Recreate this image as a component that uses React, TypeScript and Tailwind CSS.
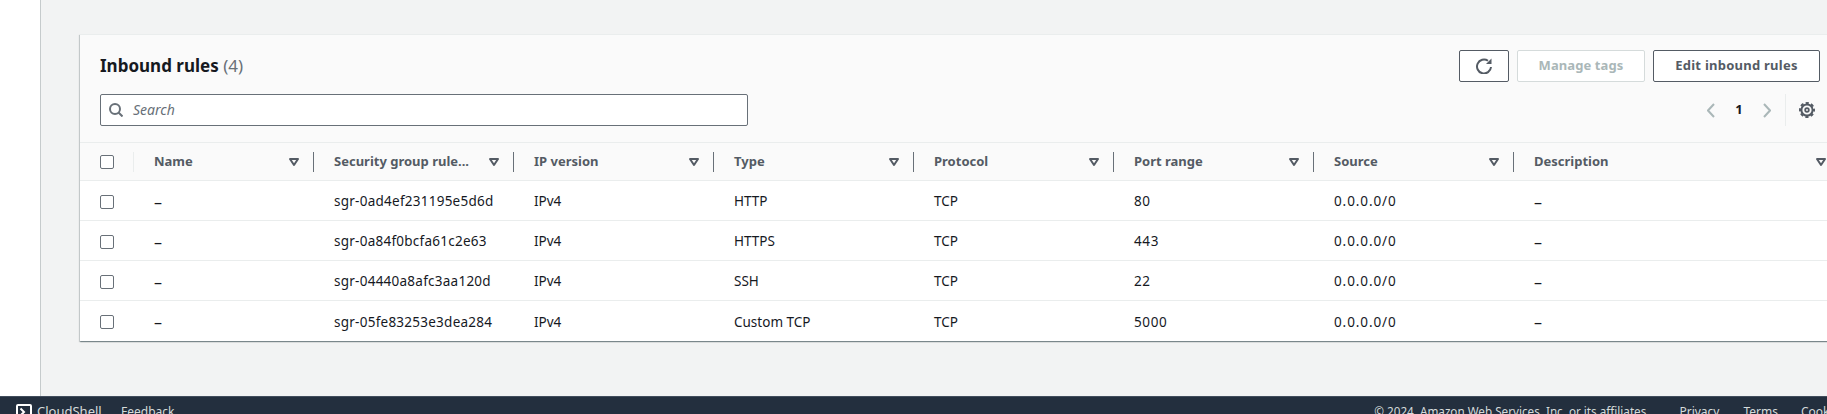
const columns = ["Name", "Security group rule...", "IP version", "Type", "Protocol", "Port range", "Source", "Description"];

const rules = [
  { id: "sgr-0ad4ef231195e5d6d", type: "HTTP", port: "80" },
  { id: "sgr-0a84f0bcfa61c2e63", type: "HTTPS", port: "443" },
  { id: "sgr-04440a8afc3aa120d", type: "SSH", port: "22" },
  { id: "sgr-05fe83253e3dea284", type: "Custom TCP", port: "5000" },
];

const tableGrid = "grid grid-cols-[54px_180px_200px_200px_200px_200px_200px_200px_326px]";

function Checkbox() {
  return <span className="block w-[14px] h-[14px] rounded-[2px] border border-[#687078] bg-white" />;
}

function FilterIcon() {
  return (
    <svg viewBox="0 0 12 10" className="w-[12px] h-[10px] shrink-0" fill="none" stroke="#545b64" strokeWidth="2">
      <path d="M2 2h8L6 8z" strokeLinejoin="round" />
    </svg>
  );
}

function SearchIcon() {
  return (
    <svg viewBox="0 0 14 14" className="w-[14px] h-[14px] shrink-0" fill="none" stroke="#687078" strokeWidth="2">
      <circle cx="6" cy="6" r="5" />
      <path d="M9.5 9.5 13.5 13.5" />
    </svg>
  );
}

function RefreshIcon() {
  return (
    <svg viewBox="0 0 16 16" className="w-4 h-4" fill="none" stroke="#545b64" strokeWidth="2">
      <path d="M15 9a7 7 0 1 1-3-6.3" />
      <path d="M15.5 0.5v5.5H10z" fill="#545b64" stroke="none" />
    </svg>
  );
}

function GearIcon() {
  return (
    <svg viewBox="0 0 16 16" className="w-4 h-4" fill="none" stroke="#545b64">
      <circle cx="8" cy="8" r="5.6" strokeWidth="2" />
      <circle cx="8" cy="8" r="7" strokeWidth="2" strokeDasharray="3.2 2.3" strokeDashoffset="1.6" />
      <circle cx="8" cy="8" r="1.8" strokeWidth="1.8" />
    </svg>
  );
}

function Chevron({ right = false }: { right?: boolean }) {
  return (
    <svg viewBox="0 0 8 15" className="w-[8px] h-[15px]" fill="none" stroke="#aab7b8" strokeWidth="2">
      <path d={right ? "M1 1l6 6.5L1 14" : "M7 1L1 7.5 7 14"} />
    </svg>
  );
}

function CloudShellIcon() {
  return (
    <svg viewBox="0 0 16 16" className="w-4 h-4 shrink-0" fill="none" stroke="#ffffff" strokeWidth="2">
      <rect x="1" y="1" width="14" height="14" rx="1" />
      <path d="M4.5 4.5 8 8l-3.5 3.5" />
    </svg>
  );
}

export default function App() {
  return (
    <div className="w-[1827px] h-[414px] overflow-hidden flex flex-col bg-[#f2f3f3] text-[14px] text-[#16191f] font-['Noto_Sans',sans-serif]">
      <div className="flex flex-1 min-h-0">
        <div className="w-[41px] shrink-0 bg-white border-r border-[#c6cbcc]" />
        <main className="flex-1 min-w-0 pt-[34px] pl-[39px]">
          <section className="w-[1760px] bg-white shadow-[0_1px_1px_0_rgba(0,28,36,0.3),1px_1px_1px_0_rgba(0,28,36,0.15),-1px_1px_1px_0_rgba(0,28,36,0.15)] border-t border-[#eaeded]">
            <div className="bg-[#fafafa] px-5 pt-[15px] pb-[16px] flex justify-between items-start">
              <div className="w-[648px]">
                <h2 className="text-[17px] leading-[22px] font-bold mt-[5px]">
                  Inbound rules <span className="font-normal text-[#687078]">(4)</span>
                </h2>
                <div className="mt-[17px] h-[32px] w-full flex items-center gap-[10px] pl-[8px] rounded-[2px] border border-[#687078] bg-white">
                  <SearchIcon />
                  <span className="italic text-[#687078] text-[14px] pb-[2px]">Search</span>
                </div>
              </div>
              <div className="flex flex-col items-end">
                <div className="flex gap-2">
                  <button className="w-[50px] h-[32px] flex items-center justify-center bg-white rounded-[2px] border border-[#545b64]">
                    <RefreshIcon />
                  </button>
                  <button className="w-[128px] h-[32px] bg-white rounded-[2px] border border-[#d5dbdb] text-[#aab7b8] font-bold text-[13px] tracking-[0.1px]">
                    Manage tags
                  </button>
                  <button className="w-[167px] h-[32px] bg-white rounded-[2px] border border-[#545b64] text-[#545b64] font-bold text-[13px] tracking-[0.25px]">
                    Edit inbound rules
                  </button>
                </div>
                <div className="mt-[12px] h-[32px] flex items-center mr-[5px]">
                  <Chevron />
                  <span className="w-[48px] text-center font-bold text-[13px]">1</span>
                  <Chevron right />
                  <span className="w-px h-[32px] bg-[#eaeded] ml-[14px] mr-[13px]" />
                  <GearIcon />
                </div>
              </div>
            </div>

            <div className={`${tableGrid} h-[39px] bg-[#fafafa] border-y border-[#eaeded] items-center text-[13px] font-bold text-[#545b64]`}>
              <div className="pl-5 h-[20px] flex items-center border-r border-[#eaeded]">
                <Checkbox />
              </div>
              {columns.map((col) => (
                <div key={col} className="h-[20px] pl-5 pr-[13px] flex items-center justify-between border-r border-[#687078] last:border-r-0">
                  <span>{col}</span>
                  <FilterIcon />
                </div>
              ))}
            </div>

            {rules.map((rule) => (
              <div key={rule.id} className={`${tableGrid} h-[40px] pt-[2px] items-center border-b border-[#eaeded] last:border-b-0 text-[13.5px]`}>
                <div className="pl-5"><Checkbox /></div>
                <div className="pl-5 text-[16px] leading-none">–</div>
                <div className="pl-5 tracking-[0.25px]">{rule.id}</div>
                <div className="pl-5">IPv4</div>
                <div className="pl-5">{rule.type}</div>
                <div className="pl-5">TCP</div>
                <div className="pl-5 tracking-[0.6px]">{rule.port}</div>
                <div className="pl-5 tracking-[0.9px]">0.0.0.0/0</div>
                <div className="pl-5 text-[16px] leading-none">–</div>
              </div>
            ))}
          </section>
        </main>
      </div>

      <footer className="h-[18px] shrink-0 bg-[#232f3e] border-t border-[#414d5c] text-[12px] text-[#d5dbdb] overflow-hidden">
        <div className="h-[32px] -mt-[1px] pl-4 flex items-center">
          <CloudShellIcon />
          <span className="ml-[5px] w-[84px] text-[13px]">CloudShell</span>
          <span>Feedback</span>
          <span className="ml-auto whitespace-nowrap text-[11.7px]">© 2024, Amazon Web Services, Inc. or its affiliates.</span>
          <span className="ml-[30px]">Privacy</span>
          <span className="ml-[24px]">Terms</span>
          <span className="ml-[23px] w-[26px] overflow-hidden whitespace-nowrap">Cookie preferences</span>
        </div>
      </footer>
    </div>
  );
}
